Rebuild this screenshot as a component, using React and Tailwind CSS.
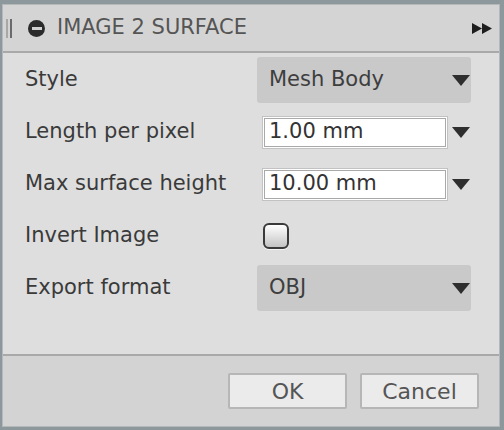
import React from "react";

function Tri() {
  return (
    <svg width="18" height="11" viewBox="0 0 18 11">
      <path d="M0 0 L18 0 L9 11 Z" fill="#2e2e2e" />
    </svg>
  );
}

function Dropdown({ value }) {
  return (
    <div className="w-[214px] h-[46px] bg-[#c9c9c9] rounded-[3px] flex items-center justify-between pl-[12px] pr-[1px]">
      <span className="text-[#3e3e3e]">{value}</span>
      <Tri />
    </div>
  );
}

function Input({ value }) {
  return (
    <div className="flex items-center ml-[5px]">
      <div className="w-[186px] h-[33px] bg-white border border-[#c2c2c2] shadow-[inset_0_0_0_1px_#ffffff,inset_0_0_0_2px_#a9a9a9] flex items-center pl-[6px] text-[#333]">
        {value}
      </div>
      <div className="ml-[4px]">
        <Tri />
      </div>
    </div>
  );
}

function Row({ label, children }) {
  return (
    <div className="h-[52px] flex items-center">
      <div className="w-[232px] text-[#3a3a3a]">{label}</div>
      {children}
    </div>
  );
}

export default function App() {
  return (
    <div
      className="w-[504px] h-[430px] bg-[#8c989c] pl-[3px] pt-[5px] overflow-hidden text-[21px]"
      style={{ fontFamily: '"DejaVu Sans", sans-serif' }}
    >
      <div className="w-[496px] h-[421px] flex flex-col shadow-[0_0_0_1px_#b4b8b9]">
        <div className="h-[46px] bg-[#d4d4d4] flex items-center border-b-2 border-[#a9a9a9] box-content">
          <div className="flex ml-[3px] h-[19px] gap-[2px]">
            <div className="w-[2px] h-full bg-[#a7a7a7]" />
            <div className="w-[2px] h-full bg-[#6a6a6a]" />
          </div>
          <div className="ml-[16px] w-[17px] h-[17px] rounded-full bg-[#2b2b2b] flex items-center justify-center">
            <div className="w-[10px] h-[3px] bg-[#d0d0d0]" />
          </div>
          <span className="ml-[12px] text-[#555555]">IMAGE 2 SURFACE</span>
          <div className="ml-auto mr-[7px]">
            <svg width="20" height="11" viewBox="0 0 20 11">
              <path d="M0 0 L10 5.5 L0 11 Z M10 0 L20 5.5 L10 11 Z" fill="#1e1e1e" />
            </svg>
          </div>
        </div>
        <div className="h-[301px] bg-[#dedede] pl-[22px] pt-[1px]">
          <Row label="Style">
            <Dropdown value="Mesh Body" />
          </Row>
          <Row label="Length per pixel">
            <Input value="1.00 mm" />
          </Row>
          <Row label="Max surface height">
            <Input value="10.00 mm" />
          </Row>
          <Row label="Invert Image">
            <div className="ml-[6px] w-[26px] h-[26px] rounded-[6px] border-2 border-[#3a3a3a] bg-gradient-to-b from-[#ffffff] to-[#c4c4c4] shadow-[0_1px_0_#f4f4f4]" />
          </Row>
          <Row label="Export format">
            <Dropdown value="OBJ" />
          </Row>
        </div>
        <div className="flex-1 bg-[#d3d3d3] border-t-2 border-[#a9a9a9] flex items-center justify-end pr-[20px] gap-[13px]">
          <button className="w-[119px] h-[36px] bg-[#ebebeb] border-2 border-[#b6b6b6] rounded-[2px] text-[22px] text-[#555] flex items-center justify-center">
            OK
          </button>
          <button className="w-[119px] h-[36px] bg-[#ebebeb] border-2 border-[#b6b6b6] rounded-[2px] text-[22px] text-[#555] flex items-center justify-center">
            Cancel
          </button>
        </div>
      </div>
    </div>
  );
}
